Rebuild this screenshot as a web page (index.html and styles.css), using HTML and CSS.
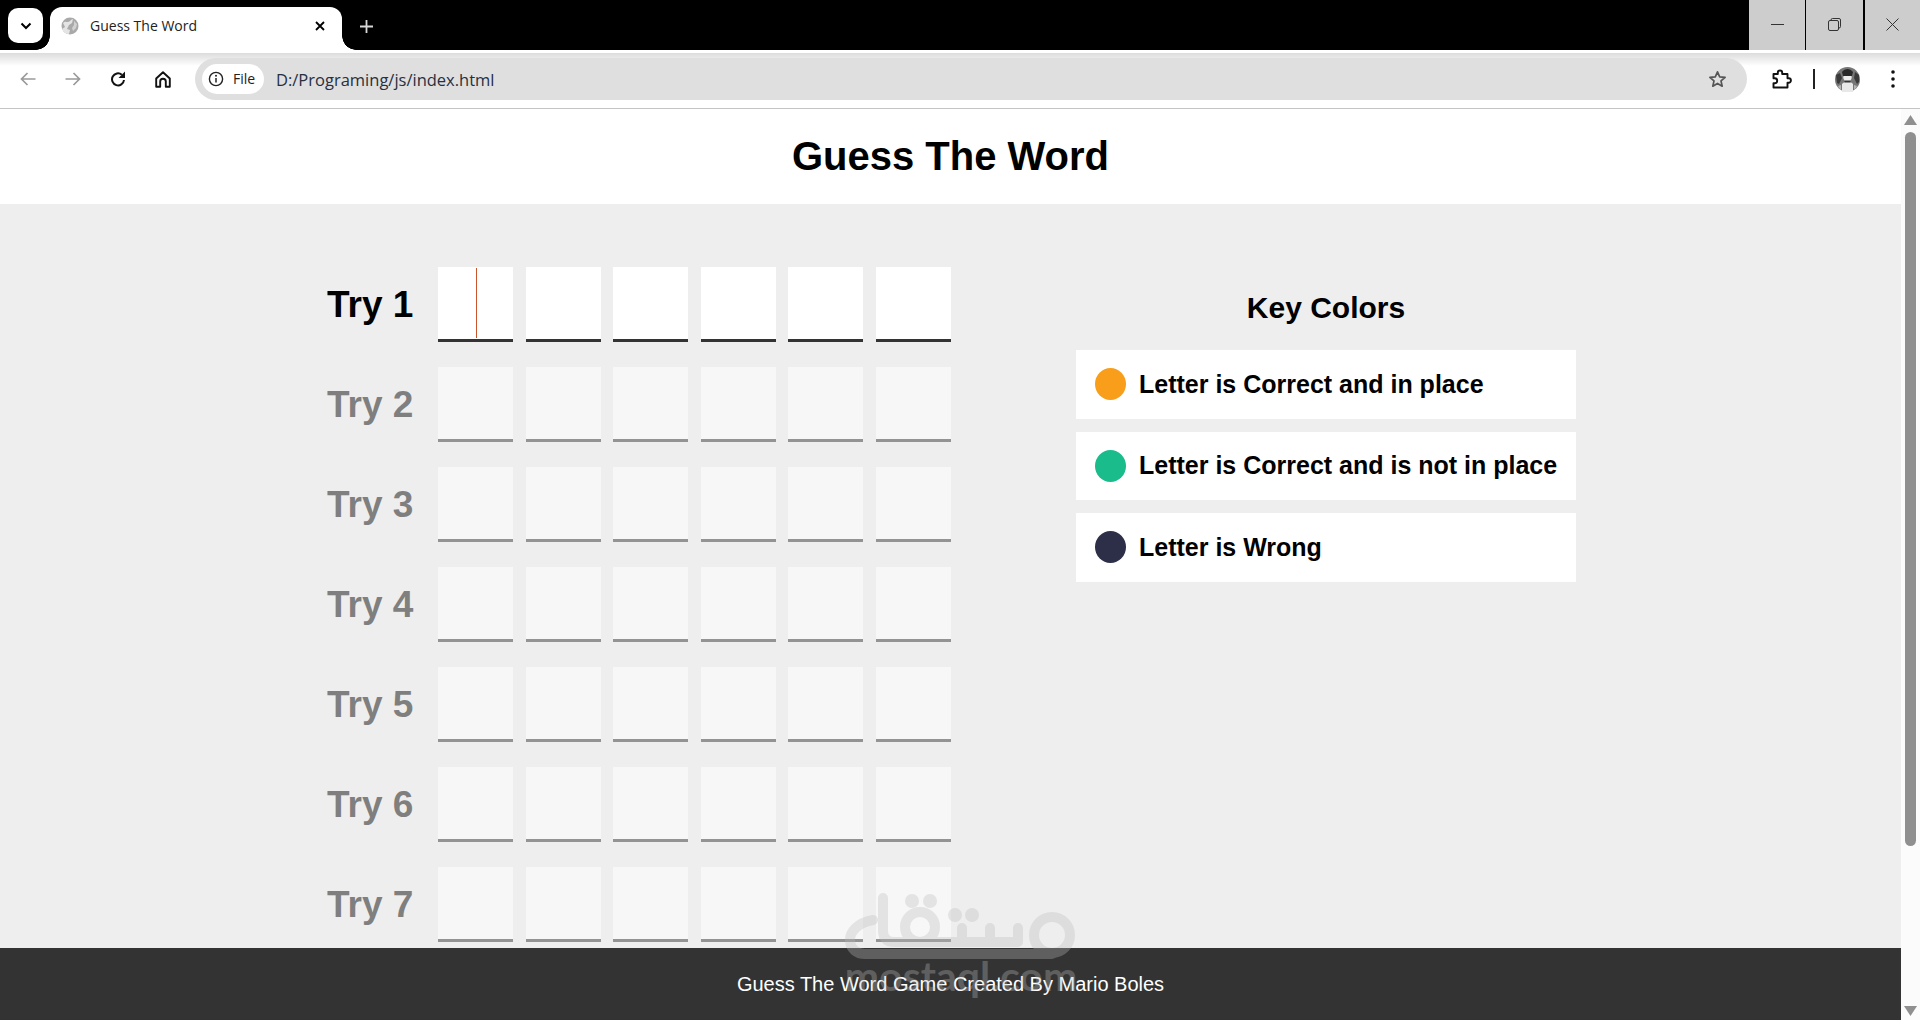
FILE: index.html
```html
<!DOCTYPE html>
<html lang="en">
<head>
<meta charset="utf-8">
<title>Guess The Word</title>
<link rel="stylesheet" href="styles.css">
</head>
<body>
<div class="tabbar">
  <button class="tabsearch" aria-label="Search tabs">
    <svg width="12" height="8" viewBox="0 0 12 8"><path d="M1.500 1.500 6 6l4.500-4.500" fill="none" stroke="#000" stroke-width="2"/></svg>
  </button>
  <div class="tab">
    <svg class="favicon" width="18" height="18" viewBox="0 0 18 18"><circle cx="9" cy="9" r="8.500" fill="#a9a9a9"/><path d="M2 6c2-2 3-1 5-1s3-3 5-3l-1 4-3 2-2 4 3 1-1 4c-3 0-6-2-7-5l3-2z" fill="#e4e4e4"/><path d="M13 4l3 3-1 4-3 3-1-3 2-3z" fill="#d2d2d2"/></svg>
    <span class="tabtitle">Guess The Word</span>
    <svg class="tabclose" width="10" height="10" viewBox="0 0 10 10"><path d="M1 1l8 8M9 1l-8 8" stroke="#000" stroke-width="1.800"/></svg>
  </div>
  <svg class="newtab" width="13" height="13" viewBox="0 0 13 13"><path d="M6.500 0v13M0 6.500h13" stroke="#d8d8d8" stroke-width="1.800"/></svg>
  <div class="winctrls">
    <div class="winbtn"><svg width="13" height="13" viewBox="0 0 13 13"><path d="M0 6.500h13" stroke="#333" stroke-width="1"/></svg></div>
    <div class="winbtn"><svg width="13" height="13" viewBox="0 0 13 13"><path d="M3 2.500V2a1.500 1.500 0 0 1 1.500-1.500H11A1.500 1.500 0 0 1 12.500 2v6.500A1.500 1.500 0 0 1 11 10h-.5" fill="none" stroke="#333"/><rect x=".5" y="2.500" width="10" height="10" rx="1.500" fill="none" stroke="#333"/></svg></div>
    <div class="winbtn"><svg width="13" height="13" viewBox="0 0 13 13"><path d="M.5.500l12 12M12.500.5l-12 12" stroke="#333" stroke-width="1"/></svg></div>
  </div>
</div>
<div class="toolbar">
  <svg class="navicon" width="16" height="14" viewBox="0 0 16 14"><path d="M15.500 7H1.500M7.500 1 1.500 7l6 6" fill="none" stroke="#9a9a9a" stroke-width="1.700"/></svg>
  <svg class="navicon" width="16" height="14" viewBox="0 0 16 14"><path d="M.5 7h14M8.500 1l6 6-6 6" fill="none" stroke="#9a9a9a" stroke-width="1.700"/></svg>
  <svg class="navicon" width="16" height="16" viewBox="0 0 16 16"><path d="M14 9a6 6 0 1 1-2.200-5.300" fill="none" stroke="#111" stroke-width="2"/><path d="M15 .5V7H8.500z" fill="#111"/></svg>
  <svg class="navicon" width="16" height="17" viewBox="0 0 16 17"><path d="M1.200 7.500 8 1.300l6.800 6.200v8.300h-4v-5.300a2.800 2.800 0 0 0-5.600 0v5.300h-4z" fill="none" stroke="#111" stroke-width="1.900" stroke-linejoin="round"/></svg>
  <div class="omnibox">
    <div class="chip">
      <svg width="16" height="16" viewBox="0 0 16 16"><circle cx="8" cy="8" r="6.600" fill="none" stroke="#222" stroke-width="1.400"/><path d="M8 7v4.500" stroke="#222" stroke-width="1.500"/><circle cx="8" cy="4.800" r="1" fill="#222"/></svg>
      <span class="chiplabel">File</span>
    </div>
    <span class="url">D:/Programing/js/index.html</span>
    <svg class="star" width="19" height="18" viewBox="0 0 19 18"><path d="M9.500 1.800l2.200 5 5.400.5-4.100 3.600 1.200 5.300-4.700-2.800-4.700 2.800 1.200-5.300L1.900 7.300l5.400-.5z" fill="none" stroke="#555" stroke-width="1.700" stroke-linejoin="round"/></svg>
  </div>
  <svg class="ext" width="20" height="20" viewBox="0 0 20 20"><path d="M1.500 5h4.300V3.700a2.200 2.200 0 0 1 4.400 0V5h5.300v4.300h1.200a2.200 2.200 0 0 1 0 4.400h-1.200v4.800H1.500v-4.300h1.200a2.500 2.500 0 0 0 0-5H1.500z" fill="none" stroke="#111" stroke-width="1.900" stroke-linejoin="round"/></svg>
  <span class="tooldiv"></span>
  <svg class="avatar" width="25" height="25" viewBox="0 0 25 25"><circle cx="12.500" cy="12.500" r="12.500" fill="#777"/><path d="M1 8l4-2 2 5-3 6-2-1zM24 8l-4-3-1 6 3 6 2-2z" fill="#3a3a3a"/><path d="M7 25V17c2-2 3-2 5.500-2s3.500 0 5.500 2v8z" fill="#e8e8e8"/><circle cx="12.500" cy="10.500" r="4.200" fill="#eee"/><path d="M7 5c3-4 8-4 11 0l-1 4H8z" fill="#2a2a2a"/><path d="M9.500 13.500h6v2h-6z" fill="#333"/><path d="M3 19l3-1v5l-2-2zM22 19l-3-1v5l2-2z" fill="#b5b5b5"/></svg>
  <svg class="kebab" width="4" height="18" viewBox="0 0 4 18"><circle cx="2" cy="2" r="1.800" fill="#111"/><circle cx="2" cy="9" r="1.800" fill="#111"/><circle cx="2" cy="16" r="1.800" fill="#111"/></svg>
</div>
<div class="viewport">
  <div class="page">
    <h1 class="title">Guess The Word</h1>
    <main class="game">
      <section class="tries">
        <div class="try active"><span class="label">Try 1</span><div class="tiles"><div class="tile caret"></div><div class="tile"></div><div class="tile"></div><div class="tile"></div><div class="tile"></div><div class="tile"></div></div></div>
        <div class="try"><span class="label">Try 2</span><div class="tiles"><div class="tile"></div><div class="tile"></div><div class="tile"></div><div class="tile"></div><div class="tile"></div><div class="tile"></div></div></div>
        <div class="try"><span class="label">Try 3</span><div class="tiles"><div class="tile"></div><div class="tile"></div><div class="tile"></div><div class="tile"></div><div class="tile"></div><div class="tile"></div></div></div>
        <div class="try"><span class="label">Try 4</span><div class="tiles"><div class="tile"></div><div class="tile"></div><div class="tile"></div><div class="tile"></div><div class="tile"></div><div class="tile"></div></div></div>
        <div class="try"><span class="label">Try 5</span><div class="tiles"><div class="tile"></div><div class="tile"></div><div class="tile"></div><div class="tile"></div><div class="tile"></div><div class="tile"></div></div></div>
        <div class="try"><span class="label">Try 6</span><div class="tiles"><div class="tile"></div><div class="tile"></div><div class="tile"></div><div class="tile"></div><div class="tile"></div><div class="tile"></div></div></div>
        <div class="try"><span class="label">Try 7</span><div class="tiles"><div class="tile"></div><div class="tile"></div><div class="tile"></div><div class="tile"></div><div class="tile"></div><div class="tile"></div></div></div>
      </section>
      <aside class="key">
        <h2 class="keytitle">Key Colors</h2>
        <div class="keyrow"><span class="dot orange"></span><span>Letter is Correct and in place</span></div>
        <div class="keyrow"><span class="dot green"></span><span>Letter is Correct and is not in place</span></div>
        <div class="keyrow"><span class="dot navy"></span><span>Letter is Wrong</span></div>
      </aside>
    </main>
    <footer class="footer">Guess The Word Game Created By Mario Boles</footer>
  </div>
  <div class="scrollbar">
    <svg width="13" height="10" viewBox="0 0 13 10"><path d="M6.500 0 13 10H0z" fill="#8f8f8f"/></svg>
    <div class="thumb"></div>
    <svg class="arrowdown" width="13" height="10" viewBox="0 0 13 10"><path d="M6.500 10 13 0H0z" fill="#8f8f8f"/></svg>
  </div>
</div>
<div class="watermark">
  <svg width="232" height="69" viewBox="0 0 232 69">
    <g fill="none" stroke="#bbb" stroke-width="10" stroke-linecap="round" stroke-linejoin="round">
      <path d="M28 27C12 30 5 39 5 47c0 9 7 14 15 14h187"/>
      <circle cx="207" cy="42" r="18"/>
      <path d="M38 5v33c0 7 4 11 11 11h124V35M117 35v14M145 35v14"/>
      <circle cx="75" cy="34" r="15"/>
    </g>
    <g fill="#bbb"><circle cx="67" cy="8" r="7"/><circle cx="85" cy="8" r="7"/><circle cx="110" cy="22" r="7"/><circle cx="127" cy="22" r="7"/></g>
  </svg>
  <span class="wmtext">mostaql.com</span>
</div>
</body>
</html>
```

FILE: styles.css
```css
* { box-sizing: border-box; }
html, body { margin: 0; height: 100%; overflow: hidden; }
body { display: flex; flex-direction: column; position: relative; font-family: "Liberation Sans", Arial, sans-serif; background: #fff; }

.tabbar { height: 50px; background: #000; display: flex; align-items: flex-start; position: relative; flex: none; }
.tabsearch { width: 35px; height: 35px; margin: 8px 0 0 8px; border: 0; padding: 0; border-radius: 10px; background: #fff; display: flex; align-items: center; justify-content: center; flex: none; }
.tab { width: 292px; height: 43px; margin: 7px 0 0 7px; background: #fff; border-radius: 12px 12px 0 0; display: flex; align-items: center; padding: 0 17px 5px 11px; position: relative; flex: none; }
.tab::before, .tab::after { content: ""; position: absolute; bottom: 0; width: 14px; height: 14px; }
.tab::before { left: -14px; background: radial-gradient(circle at 0 0, transparent 13.500px, #fff 14px); }
.tab::after { right: -14px; background: radial-gradient(circle at 100% 0, transparent 13.500px, #fff 14px); }
.favicon { flex: none; }
.tabtitle { font-family: "Open Sans", "Noto Sans", sans-serif; font-size: 14px; color: #222; margin: 0 0 1px 11px; flex: 1; }
.tabclose { flex: none; }
.newtab { margin: 20px 0 0 18px; flex: none; }
.winctrls { margin-left: auto; display: flex; height: 50px; }
.winbtn { width: 56px; height: 50px; padding-bottom: 1px; background: #cdcdcd; display: flex; align-items: center; justify-content: center; }
.winbtn:nth-child(2) { width: 58px; border-left: 1px solid #000; }
.winbtn:nth-child(3) { width: 57px; border-left: 2px solid #000; }

.toolbar { height: 59px; flex: none; background: linear-gradient(#fff 0, #fff 3px, #dcdcdc 3px, #fff 16px); border-bottom: 1px solid #c4c4c4; display: flex; align-items: center; position: relative; padding: 0 0 0 20px; }
.navicon { flex: none; margin-right: 29px; }
.navicon:nth-child(4) { margin-right: 24px; }
.omnibox { flex: none; width: 1552px; height: 42px; background: #dfdfdf; border-radius: 21px; display: flex; align-items: center; padding: 0 20px 0 7px; }
.chip { height: 30px; width: 62px; background: #fff; border-radius: 15px; display: flex; align-items: center; gap: 9px; padding-left: 6px; font-family: "Open Sans", "Noto Sans", sans-serif; font-size: 14px; color: #222; flex: none; }
.chiplabel { margin-bottom: 2px; }
.url { font-family: "Open Sans", "Noto Sans", sans-serif; font-size: 16.500px; color: #26303f; margin-left: 12px; flex: 1; }
.star { flex: none; }
.ext { flex: none; margin-left: 25px; }
.tooldiv { width: 2px; height: 20px; background: #222; margin-left: 21px; flex: none; }
.avatar { margin-left: 20px; flex: none; }
.kebab { margin-left: 31px; flex: none; }

.viewport { flex: 1; display: flex; min-height: 0; }
.page { flex: 1; min-width: 0; display: flex; flex-direction: column; }
.scrollbar { width: 19px; flex: none; background: #fbfbfb; display: flex; flex-direction: column; align-items: center; padding: 6px 3px 4px; }
.thumb { width: 11px; height: 714px; flex: none; background: #8f8f8f; border-radius: 6px; margin-top: 7px; }
.arrowdown { margin-top: auto; }

.title { margin: 0; height: 95px; flex: none; display: flex; align-items: center; justify-content: center; font-size: 40px; font-weight: 700; color: #000; background: #fff; }
.game { flex: 1; min-height: 0; overflow: hidden; background: #eee; display: flex; padding: 63px 0 0 327px; }
.tries { width: 749px; flex: none; display: flex; flex-direction: column; gap: 25px; }
.try { display: flex; align-items: center; height: 75px; flex: none; }
.label { width: 111px; flex: none; font-size: 37px; font-weight: 700; color: #000; }
.try:not(.active) .label { color: #7f7f7f; }
.tiles { display: flex; gap: 12.600px; }
.tile { width: 75px; height: 75px; background: #fff; border-bottom: 3px solid #333; }
.try:not(.active) .tile { background: #f7f7f7; border-bottom-color: #939393; }
.caret { position: relative; }
.caret::after { content: ""; position: absolute; left: 38px; top: 1px; width: 1px; height: 70px; background: #c9552c; }

.key { width: 500px; flex: none; }
.keytitle { margin: 0; font-size: 30px; font-weight: 700; text-align: center; color: #000; padding-top: 24px; height: 83px; }
.keyrow { height: 68.500px; margin-bottom: 13px; background: #fff; display: flex; align-items: center; padding-left: 19px; gap: 13px; font-size: 25px; font-weight: 700; color: #000; white-space: nowrap; }
.dot { width: 31px; height: 32px; border-radius: 50%; flex: none; }
.orange { background: #f89e1b; }
.green { background: #1abc8b; }
.navy { background: #2c2f47; }

.footer { height: 72px; flex: none; background: #333; color: #fff; font-size: 20px; display: flex; align-items: center; justify-content: center; position: relative; }

.watermark { position: absolute; left: 845px; top: 893px; width: 232px; display: flex; flex-direction: column; align-items: center; opacity: .32; pointer-events: none; }
.wmtext { font-family: "Lato", sans-serif; font-weight: 700; font-size: 41px; line-height: 40px; color: #bbb; margin-top: -6px; }
```
